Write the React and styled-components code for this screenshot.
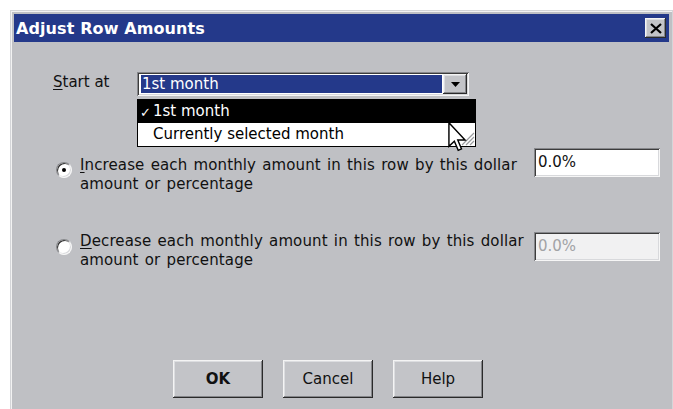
import React from 'react';
import styled, { createGlobalStyle, css } from 'styled-components';

const GlobalStyle = createGlobalStyle`
  html, body { margin: 0; padding: 0; background: #ffffff; }
  body { font-family: "DejaVu Sans", Tahoma, sans-serif; }
  * { box-sizing: border-box; }
`;

const raised = css`
  box-shadow: inset -1px -1px 0 #2a2a2a, inset 1px 1px 0 #f4f4f4,
    inset -2px -2px 0 #85868a, inset 2px 2px 0 #dcdde0;
`;

const sunken = css`
  box-shadow: inset 1px 1px 0 #86878b, inset -1px -1px 0 #f6f6f6,
    inset 2px 2px 0 #3c3c3c, inset -2px -2px 0 #d8d9dc;
`;

const Page = styled.div`
  width: 673px;
  height: 409px;
  overflow: hidden;
  padding: 10px 0 0 10px;
`;

const Window = styled.div`
  width: 663px;
  height: 430px;
  background: #bfc0c4;
  border: 1px solid #d4d5d8;
  padding: 3px;
  box-shadow: inset 1px 1px 0 #f2f2f2;
  display: flex;
  flex-direction: column;
`;

const TitleBar = styled.div`
  height: 28px;
  background: #24398a;
  display: flex;
  align-items: center;
  justify-content: space-between;
  padding: 0 3px 0 2px;
`;

const Title = styled.span`
  color: #ffffff;
  font-weight: bold;
  font-size: 16px;
  letter-spacing: 0.1px;
`;

const CloseButton = styled.div`
  width: 21px;
  height: 20px;
  background: #c3c4c8;
  ${raised};
  display: flex;
  align-items: center;
  justify-content: center;
`;

const Body = styled.div`
  flex: 1;
  display: flex;
  flex-direction: column;
  padding-top: 30px;
  font-size: 15px;
  color: #111;
`;

const StartRow = styled.div`
  display: flex;
  align-items: center;
  height: 24px;
  padding-left: 39px;
`;

const FieldLabel = styled.span`
  width: 84px;
  padding-bottom: 5px;
`;

const Mnemonic = styled.span`
  text-decoration: underline;
  text-underline-offset: 2px;
`;

const Combo = styled.div`
  position: relative;
  width: 332px;
  height: 24px;
  background: #ffffff;
  ${sunken};
  padding: 2px;
  display: flex;
`;

const ComboValue = styled.div`
  flex: 1;
  margin: 1px 1px 1px 2px;
  background: #24398a;
  color: #ffffff;
  line-height: 18px;
  padding-left: 1px;
`;

const ComboButton = styled.div`
  width: 24px;
  background: #c3c4c8;
  ${raised};
  display: flex;
  align-items: center;
  justify-content: center;
`;

const DropList = styled.div`
  position: absolute;
  left: 0;
  top: 27px;
  width: 339px;
  border: 1px solid #000;
  background: #ffffff;
  z-index: 2;
`;

const ListItem = styled.div`
  position: relative;
  height: 23px;
  line-height: 23px;
  padding-left: 15px;
  ${(p) =>
    p.$active
      ? css`
          background: #000;
          color: #fff;
        `
      : css`
          background: #fff;
          color: #000;
        `}
`;

const Check = styled.span`
  position: absolute;
  left: 2px;
  top: 1px;
  font-size: 13px;
`;

const Grip = styled.svg`
  position: absolute;
  right: 0;
  bottom: 0;
`;

const Pointer = styled.svg`
  position: absolute;
  left: 310px;
  top: 22px;
  z-index: 3;
`;

const OptionRow = styled.div`
  display: grid;
  grid-template-columns: 16px 1fr 126px;
  column-gap: 8px;
  align-items: start;
  padding-left: 42px;
  padding-right: 9px;
  margin-top: ${(p) => p.$gap}px;
`;

const Radio = styled.span`
  width: 16px;
  height: 16px;
  margin-top: ${(p) => p.$offset}px;
  border-radius: 50%;
  border: 1px solid;
  border-color: #85868a #f7f7f7 #f7f7f7 #85868a;
  background: #ffffff;
  box-shadow: inset 1px 1px 0 #2f2f2f, inset -1px -1px 0 #d8d9dc;
  display: flex;
  align-items: center;
  justify-content: center;
  &::after {
    content: '';
    display: ${(p) => (p.$checked ? 'block' : 'none')};
    width: 4px;
    height: 4px;
    border-radius: 50%;
    background: #000;
  }
`;

const OptionText = styled.div`
  line-height: 19px;
  margin-top: ${(p) => p.$offset}px;
  white-space: nowrap;
  letter-spacing: 0.12px;
  word-spacing: 1.3px;
`;

const Amount = styled.div`
  height: 29px;
  margin-top: ${(p) => p.$offset}px;
  ${sunken};
  background: ${(p) => (p.$disabled ? '#f1f1f2' : '#ffffff')};
  color: ${(p) => (p.$disabled ? '#a2a3a6' : '#111')};
  padding: 3px 4px;
  line-height: 23px;
`;

const ButtonRow = styled.div`
  display: flex;
  gap: 20px;
  padding-left: 159px;
  margin-top: 90px;
`;

const Button = styled.div`
  width: 90px;
  height: 38px;
  background: #c3c4c8;
  ${raised};
  display: flex;
  align-items: center;
  justify-content: center;
  font-weight: ${(p) => (p.$primary ? 'bold' : 'normal')};
  color: #111;
`;

function CloseGlyph() {
  return (
    <svg width="12" height="11" viewBox="0 0 12 11">
      <path d="M1 1 L11 10 M11 1 L1 10" stroke="#000" strokeWidth="2.2" />
    </svg>
  );
}

function DownArrow() {
  return (
    <svg width="9" height="5" viewBox="0 0 9 5">
      <path d="M0 0 H9 L4.5 5 Z" fill="#000" />
    </svg>
  );
}

export default function App() {
  return (
    <Page>
      <GlobalStyle />
      <Window>
        <TitleBar>
          <Title>Adjust Row Amounts</Title>
          <CloseButton>
            <CloseGlyph />
          </CloseButton>
        </TitleBar>
        <Body>
          <StartRow>
            <FieldLabel>
              <Mnemonic>S</Mnemonic>tart at
            </FieldLabel>
            <Combo>
              <ComboValue>1st month</ComboValue>
              <ComboButton>
                <DownArrow />
              </ComboButton>
              <DropList>
                <ListItem $active>
                  <Check>✓</Check>1st month
                </ListItem>
                <ListItem>Currently selected month</ListItem>
                <Grip width="14" height="16" viewBox="0 0 14 16">
                  <path d="M13 3 L1 15 M13 7 L5 15 M13 11 L9 15" stroke="#9a9b9e" strokeWidth="1.2" />
                </Grip>
                <Pointer width="19" height="30" viewBox="0 0 13 21">
                  <path
                    d="M0.5 0.5 L0.5 17 L4.3 13.4 L7 19.8 L9.3 18.8 L6.7 12.6 L11.8 12.6 Z"
                    fill="#fff"
                    stroke="#000"
                    strokeWidth="1"
                    strokeLinejoin="miter"
                  />
                </Pointer>
              </DropList>
            </Combo>
          </StartRow>

          <OptionRow $gap={52}>
            <Radio $checked $offset={14} />
            <OptionText $offset={8}>
              <Mnemonic>I</Mnemonic>ncrease each monthly amount in this row by this dollar
              <br />
              amount or percentage
            </OptionText>
            <Amount $offset={0}>0.0%</Amount>
          </OptionRow>

          <OptionRow $gap={36}>
            <Radio $offset={9} />
            <OptionText $offset={2}>
              <Mnemonic>D</Mnemonic>ecrease each monthly amount in this row by this dollar
              <br />
              amount or percentage
            </OptionText>
            <Amount $disabled $offset={2}>0.0%</Amount>
          </OptionRow>

          <ButtonRow>
            <Button $primary>OK</Button>
            <Button>Cancel</Button>
            <Button>Help</Button>
          </ButtonRow>
        </Body>
      </Window>
    </Page>
  );
}
